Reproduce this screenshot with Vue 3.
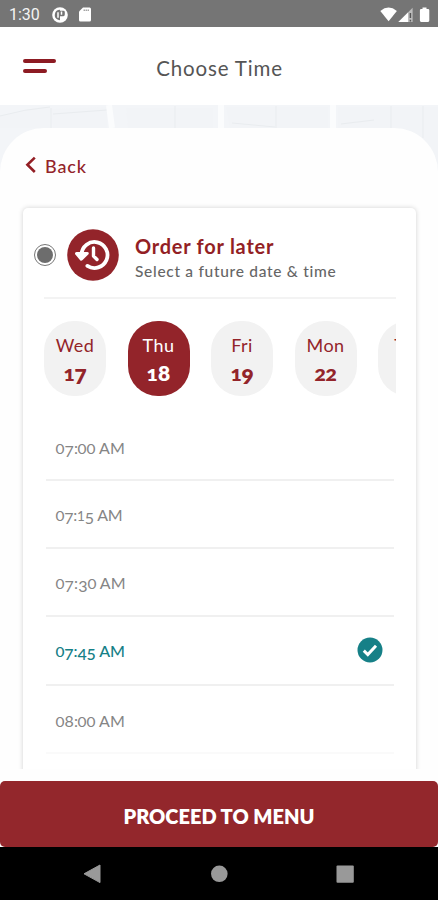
<script setup>
const days = [
  { name: 'Wed', date: '17' },
  { name: 'Thu', date: '18', active: true },
  { name: 'Fri', date: '19' },
  { name: 'Mon', date: '22' },
  { name: 'Tue', date: '' },
]

const slots = [
  { time: '07:00 AM' },
  { time: '07:15 AM' },
  { time: '07:30 AM' },
  { time: '07:45 AM', selected: true },
  { time: '08:00 AM' },
]

// Old-style numerals: 0-2 sit at x-height, 3 4 5 7 9 hang below the baseline.
const figure = (c) => (c === '0' ? 'short round' : '12'.includes(c) ? 'short' : '34579'.includes(c) ? 'low' : '')
</script>

<template>
  <div class="screen">
    <div class="status">
      <span class="clock">1:30</span>
      <svg class="app-dot" viewBox="0 0 16 16" width="16" height="16">
        <circle cx="8" cy="8" r="7.8" fill="#fff" />
        <path d="M8 2.8A5.2 5.2 0 0 0 6 12.8L8 13.2V9.2H11.4Q12.8 9.2 12.8 7.6V5.2Q12.8 3.8 11.4 3.8H8Z" fill="#757575" />
        <path d="M6 5.2V10.8M9.5 4.6V7.8" stroke="#fff" stroke-width="1.5" />
      </svg>
      <svg class="sd" viewBox="0 0 12 15" width="12" height="15">
        <path d="M4 0.5H10.6Q12 .5 12 2V13Q12 14.5 10.6 14.5H1.4Q0 14.5 0 13V4.5Z" fill="#fff" />
        <path d="M5.2 2.4V4M7.2 2.4V4M9.2 2.4V4" stroke="#888" stroke-width="1.1" />
      </svg>
      <svg class="signals" viewBox="0 0 50 16" width="50" height="16">
        <path d="M0.3 4Q8.5-2.8 16.9 4L8.6 14.3Z" fill="#fff" />
        <path d="M32.6 0.8V15H18.4Z" fill="#bdbdbd" />
        <path d="M28 5.4V15H18.4Z" fill="#fff" />
        <path d="M30.4 6V11M30.4 12.7V14.5" stroke="#555" stroke-width="1.5" />
        <path d="M42.5 0.5H46.5V2H48Q49.3 2 49.3 3.3V13.6Q49.3 15 48 15H41.2Q39.9 15 39.9 13.6V3.3Q39.9 2 41.2 2H42.5Z" fill="#fff" />
      </svg>
    </div>

    <header class="header">
      <div class="menu"><i class="long"></i><i class="brief"></i></div>
      <h1>Choose Time</h1>
    </header>

    <main class="backdrop">
      <svg class="panels" viewBox="0 0 438 70" width="438" height="70">
        <rect width="438" height="70" fill="#f3f5f8" />
        <path d="M0 11Q25 4 50 2V23H0Z M50 4L107 2V23H53Z M126 3H213V23H128Z M226 2H328V23H230Z M338 2H438V70H420L338 23Z" fill="#f2f4f7" />
        <path d="M0 11Q25 4 50 2M51 3V23M53 9L107 5M175 1V23M276 1V23M391 1V23M423 1V33M341 19L374 15M232 18L275 22" fill="none" stroke="#e9ecef" />
        <path d="M109 0L112 23M221 0V23M333 0V23" stroke="#fbfcfd" stroke-width="6" />
      </svg>
      <section class="sheet">
        <div class="back">
          <svg viewBox="0 0 12 18" width="12" height="18"><path d="M9.8 1.6L2.4 8.7L9.8 16" fill="none" stroke="#931f25" stroke-width="2.6" /></svg>
          <span>Back</span>
        </div>

        <div class="card">
          <div class="option">
            <span class="radio"><i></i></span>
            <svg class="history" viewBox="0 0 52 52" width="52" height="52">
              <circle cx="26" cy="26" r="25.8" fill="#93242a" />
              <path d="M14.5 25.5A13 13 0 1 1 20.4 36.9" fill="none" stroke="#fff" stroke-width="3.8" stroke-linecap="round" />
              <path d="M9.5 24.6L14.3 30.2L20.2 24.4Z" fill="#fff" stroke="#fff" stroke-width="3" stroke-linejoin="round" />
              <path d="M26.5 19V27L30 30.5" fill="none" stroke="#fff" stroke-width="3.4" stroke-linecap="round" stroke-linejoin="round" />
            </svg>
            <div class="copy">
              <h2>Order for later</h2>
              <p>Select a future date &amp; time</p>
            </div>
          </div>

          <div class="days">
            <div v-for="d in days" :key="d.name" class="day" :class="{ active: d.active }">
              <span class="name">{{ d.name }}</span>
              <span class="date"><span v-for="(c, i) in d.date" :key="i" :class="figure(c)">{{ c }}</span></span>
            </div>
          </div>

          <ul class="slots">
            <li v-for="s in slots" :key="s.time" :class="{ selected: s.selected }">
              <span class="time"><span v-for="(c, i) in s.time" :key="i" :class="figure(c)">{{ c }}</span></span>
              <svg v-if="s.selected" viewBox="0 0 26 26" width="26" height="26">
                <circle cx="13" cy="13" r="12.5" fill="#168087" />
                <path d="M6.8 13.6L10.8 17.5L19 8.8" fill="none" stroke="#fff" stroke-width="3" />
              </svg>
            </li>
          </ul>
        </div>
      </section>
    </main>

    <div class="action"><button>PROCEED TO MENU</button></div>

    <nav class="nav">
      <svg viewBox="0 0 438 53" width="438" height="53">
        <path d="M84 26.8L100 18V35.6Z" fill="#999" stroke="#999" stroke-linejoin="round" />
        <circle cx="219.3" cy="26.8" r="8.3" fill="#999" />
        <rect x="336.5" y="18.5" width="17.3" height="17.3" rx="1" fill="#999" />
      </svg>
    </nav>
  </div>
</template>

<style>
body {
  background: #fff;
}
</style>

<style scoped>
.screen {
  width: 438px;
  height: 900px;
  display: flex;
  flex-direction: column;
  overflow: hidden;
  background: #fefefe;
  font-family: Lato, "Open Sans", sans-serif;
  color: #555;
}
h1, h2, p, ul {
  margin: 0;
  padding: 0;
  font-weight: 400;
}
svg {
  display: block;
  flex: none;
}
.status {
  height: 27px;
  flex: none;
  display: flex;
  align-items: center;
  box-sizing: border-box;
  padding: 2px 8px 0 9px;
  background: #757575;
}
.clock {
  width: 43px;
  font: 16px/20px Roboto, sans-serif;
  color: #f3f3f3;
}
.sd {
  margin-left: 11px;
}
.signals {
  margin-left: auto;
}
.header {
  height: 78px;
  flex: none;
  display: grid;
  grid-template-columns: 80px 278px 80px;
  align-items: center;
  background: #fff;
}
.menu {
  display: flex;
  flex-direction: column;
  gap: 6px;
  padding: 0 0 1px 23px;
}
.menu i {
  height: 4px;
  border-radius: 2px;
  background: #8d1b23;
}
.long {
  width: 33px;
}
.brief {
  width: 24px;
}
h1 {
  text-align: center;
  font-size: 20.5px;
  line-height: 26px;
  letter-spacing: .85px;
  padding: 3px 0 0 1px;
  color: #555;
}
.backdrop {
  height: 664px;
  flex: none;
  display: grid;
  overflow: hidden;
}
.panels {
  grid-area: 1 / 1;
}
.sheet {
  grid-area: 1 / 1;
  margin-top: 23px;
  border-radius: 44px 44px 0 0;
  background: #fefefe;
  overflow: hidden;
}
.back {
  display: flex;
  align-items: center;
  gap: 8px;
  padding: 26px 0 0 25px;
  height: 22px;
  font-size: 18px;
  font-weight: 500;
  letter-spacing: .9px;
  color: #93242a;
}
.back span {
  padding-top: 2px;
}
.card {
  margin: 32px 22px 0 23px;
  height: 592px;
  box-sizing: border-box;
  padding: 0 20px 0 21px;
  border-radius: 5px;
  background: #fff;
  box-shadow: 0 0 5px rgba(0, 0, 0, .18);
}
.option {
  height: 91px;
  box-sizing: border-box;
  display: flex;
  align-items: center;
  padding-top: 5px;
  border-bottom: 2px solid #f3f3f3;
}
.radio {
  width: 22px;
  height: 22px;
  box-sizing: border-box;
  margin-left: -10px;
  border: 1.5px solid #777;
  border-radius: 50%;
  display: grid;
  place-items: center;
}
.radio i {
  width: 16px;
  height: 16px;
  border-radius: 50%;
  background: #6d6d6d;
}
.history {
  margin-left: 11px;
}
.copy {
  margin-left: 16px;
  padding-top: 7px;
  white-space: nowrap;
}
h2 {
  font-size: 20px;
  line-height: 25px;
  font-weight: 700;
  letter-spacing: .75px;
  color: #931f25;
}
p {
  font-size: 15.5px;
  line-height: 24px;
  font-weight: 500;
  letter-spacing: .7px;
  color: #666;
}
.days {
  display: flex;
  gap: 21.5px;
  margin-top: 22px;
  overflow: hidden;
}
.day {
  width: 62px;
  height: 75px;
  flex: none;
  box-sizing: border-box;
  padding-top: 10px;
  border-radius: 30px;
  background: #f2f2f2;
  text-align: center;
  color: #93242a;
}
.day span {
  line-height: 28px;
}
.name, .date {
  display: block;
  height: 28px;
}
.name {
  font-size: 18px;
  letter-spacing: .4px;
}
.date {
  font-size: 21px;
  font-weight: 800;
}
.short {
  font-size: .84em;
}
.day .short, .day .low, .time .short, .time .low {
  display: inline-block;
  line-height: 1;
}
.low {
  transform: translateY(.16em);
}
.time .round {
  transform: scaleX(1.15);
  margin: 0 .3px;
}
.date .short {
  transform: scaleX(1.1);
  margin: 0 .5px;
}
.active {
  background: #93242a;
  color: #fff;
}
.slots {
  list-style: none;
  margin: 16px 2px 0 2px;
}
li {
  height: 68.5px;
  box-sizing: border-box;
  display: flex;
  align-items: center;
  justify-content: space-between;
  padding: 5px 11px 0 10px;
  border-bottom: 2px solid #f0f0f0;
  color: #858585;
}
li:nth-child(2), li:nth-child(3) {
  height: 68px;
  padding-top: 3px;
}
li:nth-child(2) .time {
  letter-spacing: -.2px;
}
li:last-child {
  border-bottom-color: #fafafa;
}
.time {
  font-size: 16px;
  line-height: 20px;
  letter-spacing: .15px;
  white-space: pre;
}
li.selected {
  height: 69px;
  padding-top: 0;
  color: #168087;
}
.selected .time {
  padding-top: 2px;
  font-weight: 500;
  letter-spacing: -.1px;
}
.action {
  height: 78px;
  flex: none;
  box-sizing: border-box;
  padding-top: 12px;
  background: #fefefe;
}
button {
  display: block;
  width: 438px;
  height: 66px;
  border: 0;
  border-radius: 5px;
  padding: 4px 0 0;
  background: #93272c;
  font: 800 20px/24px Lato, sans-serif;
  color: #fff;
}
.nav {
  height: 53px;
  flex: none;
  background: #000;
}
</style>
